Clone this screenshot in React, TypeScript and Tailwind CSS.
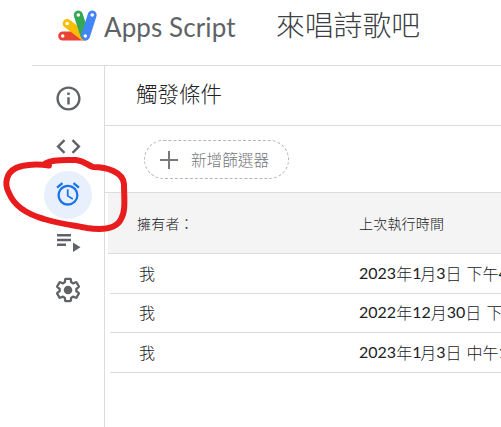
import type { ReactNode } from "react";
import { MdAlarm, MdCode, MdInfoOutline } from "react-icons/md";

const cjk = "font-['Noto_Sans_CJK_TC',sans-serif] font-light";

function Logo() {
  return (
    <svg className="ml-[25px] shrink-0" width="42" height="34" viewBox="57 9 42 34" fill="none" strokeLinecap="round" strokeWidth="9">
      <path d="M62.7 36H84" stroke="#ea4335" />
      <path d="M67.2 23.5L83.5 36" stroke="#fbbc04" />
      <path d="M78.3 15L84.8 35" stroke="#34a853" />
      <path d="M92.2 15L85.5 36" stroke="#4285f4" />
      <g fill="#fff">
        <circle cx="62.7" cy="36" r="1.8" />
        <circle cx="67.2" cy="23.5" r="1.8" />
        <circle cx="78.3" cy="15" r="1.8" />
        <circle cx="92.2" cy="15" r="1.8" />
        <circle cx="85.3" cy="36" r="1.8" />
      </g>
    </svg>
  );
}

function Executions() {
  return (
    <svg width="30" height="30" viewBox="0 0 30 30" fill="currentColor">
      <path d="M4 7h14v2.4H4zM4 11.8h14v2.4H4zM4 16.6h9V19H4zM20 15.6l7.5 4.7-7.5 4.7z" />
    </svg>
  );
}

function Gear() {
  return (
    <svg width="30" height="30" viewBox="0 0 24 24" fill="none">
      <path
        transform="translate(.84 .84) scale(.93)"
        stroke="currentColor"
        strokeWidth="2"
        strokeLinejoin="round"
        d="M19.14 12.94c.04-.3.06-.61.06-.94 0-.32-.02-.64-.07-.94l2.03-1.58c.18-.14.23-.41.12-.61l-1.92-3.32c-.12-.22-.37-.29-.59-.22l-2.39.96c-.5-.38-1.03-.7-1.62-.94l-.36-2.54c-.04-.24-.24-.41-.48-.41h-3.84c-.24 0-.43.17-.47.41l-.36 2.54c-.59.24-1.13.57-1.62.94l-2.39-.96c-.22-.08-.47 0-.59.22L2.74 8.87c-.12.21-.08.47.12.61l2.03 1.58c-.05.3-.09.63-.09.94s.02.64.07.94l-2.03 1.58c-.18.14-.23.41-.12.61l1.92 3.32c.12.22.37.29.59.22l2.39-.96c.5.38 1.03.7 1.62.94l.36 2.54c.05.24.24.41.48.41h3.84c.24 0 .44-.17.47-.41l.36-2.54c.59-.24 1.13-.56 1.62-.94l2.39.96c.22.08.47 0 .59-.22l1.92-3.32c.12-.22.07-.47-.12-.61l-2.01-1.58z"
      />
      <circle cx="12" cy="12" r="3.4" fill="currentColor" />
    </svg>
  );
}

function NavItem({ children, active = false }: { children: ReactNode; active?: boolean }) {
  return (
    <div className={active ? "flex size-12 items-center justify-center rounded-full bg-[#e8f0fe] pb-[2px] text-[#1a73e8]" : "flex size-12 items-center justify-center pb-[2px] text-[#5f6368]"}>
      {children}
    </div>
  );
}

// Red pen circle around the triggers entry.
function PenMark() {
  return (
    <svg className="pointer-events-none absolute left-0 top-0" width="140" height="240" fill="none">
      <path
        d="M49 165.5C39 164 24 164 16 168C6 173 4 184 9 193C15 208 30 215 44 219C60 224 78 226 87 228C101 230 116 230 121 219C126 211 124 198 124 184C123 172 107 167 93 167C87 165 85 161 76 160C66 160 53 159 46 163"
        stroke="#e81c1c"
        strokeWidth="6"
        strokeLinecap="round"
        strokeLinejoin="round"
      />
    </svg>
  );
}

const rows = [
  { date: ["2023", "年", "1", "月", "3", "日 下午", "4"], height: "h-[40px]" },
  { date: ["2022", "年", "12", "月", "30", "日 下"], height: "h-[39px]" },
  { date: ["2023", "年", "1", "月", "3", "日 中午", "1"], height: "h-[40px]" },
];

function DateText({ parts }: { parts: string[] }) {
  return (
    <span className="flex whitespace-pre [word-spacing:1.6px]">
      {parts.map((part, i) => (
        <span
          key={i}
          className={
            i % 2 === 1
              ? ""
              : part === "1"
                ? "w-[8px] font-['Lato',sans-serif] font-normal tracking-[-1px]"
                : "font-['Lato',sans-serif] font-normal"
          }
        >
          {part}
        </span>
      ))}
    </span>
  );
}

export default function App() {
  return (
    <div className="relative flex h-[427px] w-[501px] flex-col overflow-hidden bg-white pl-8">
      <header className="flex h-[66px] shrink-0 items-start border-b border-[#dadce0] pt-[9px]">
        <Logo />
        <span className="ml-[5px] w-[172px] whitespace-nowrap pt-[2px] font-['Lato',sans-serif] text-[26px] leading-8 tracking-[0.1px] text-[#5f6368]">Apps Script</span>
        <span className={`${cjk} text-[28.8px] leading-[30px] text-[#3c4043]`}>來唱詩歌吧</span>
      </header>
      <div className="flex min-h-0 grow">
        <nav className="flex w-[73px] shrink-0 flex-col items-center border-r border-[#dadce0] pt-[9px]">
          <NavItem><MdInfoOutline size={29} /></NavItem>
          <NavItem><MdCode size={29} /></NavItem>
          <NavItem active><MdAlarm size={28} /></NavItem>
          <NavItem><Executions /></NavItem>
          <NavItem><Gear /></NavItem>
        </nav>
        <main className="flex min-w-0 grow flex-col">
          <h1 className={`${cjk} h-[60px] border-b border-[#dadce0] pl-[31px] pt-[11px] text-[21.5px] leading-8 text-[#202124]`}>觸發條件</h1>
          <div className="flex h-[67px] items-start border-b border-[#dadce0] pl-[39px] pt-[14px]">
            <button className="flex h-[39px] w-[145px] items-center rounded-full border border-dashed border-[#b4b7ba] pl-[15px] text-[#74787c]">
              <svg width="18" height="18" viewBox="0 0 18 18">
                <path d="M8 0h2v8h8v2h-8v8H8v-8H0V8h8z" fill="#777a7e" />
              </svg>
              <span className={`${cjk} ml-[13px] whitespace-nowrap text-[15.6px]`}>新增篩選器</span>
            </button>
          </div>
          <div className={`${cjk} ml-[3px] flex h-[61px] shrink-0 items-center border-b border-[#dadce0] bg-[#f4f4f4] pl-[29px] text-[14px] tracking-[0.2px] text-[#202124]`}>
            <span className="w-[222px]">擁有者：</span>
            <span className="whitespace-nowrap">上次執行時間</span>
          </div>
          {rows.map((row, i) => (
            <div key={i} className={`${cjk} ${row.height} ml-[5px] flex shrink-0 items-center overflow-hidden border-b border-[#dadce0] pb-[2px] pl-[29px] text-[16px] text-[#202124]`}>
              <span className="w-[220px] shrink-0">我</span>
              <DateText parts={row.date} />
            </div>
          ))}
        </main>
      </div>
      <PenMark />
    </div>
  );
}
